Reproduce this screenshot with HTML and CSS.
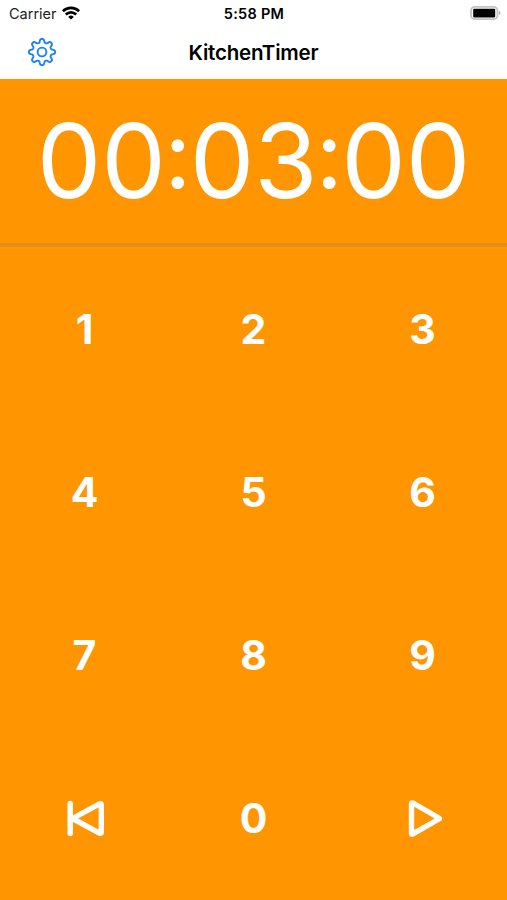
FILE: index.html
```html
<!DOCTYPE html>
<html lang="en">
<head>
<meta charset="utf-8">
<title>KitchenTimer</title>
<link rel="stylesheet" href="styles.css">
</head>
<body>
<div class="status">
  <div class="carrier"><span>Carrier</span>
    <svg class="wifi" width="18" height="14" viewBox="0 0 18 14" fill="none" stroke="#000" stroke-width="2.7"><path d="M.9 5.2a11.5 11.5 0 0 1 16.2 0"/><path d="M3.8 8.5a7.4 7.4 0 0 1 10.4 0"/><path d="M9 13.6 6.2 10.9a4 4 0 0 1 5.6 0z" fill="#000" stroke="none"/></svg>
  </div>
  <div class="clock">5:58 PM</div>
  <svg class="battery" width="31" height="14" viewBox="0 0 31 14"><rect x="1" y=".8" width="26.4" height="12.4" rx="3.8" fill="none" stroke="#c4c4c4" stroke-width="1.8"/><rect x="3.2" y="2.8" width="22" height="8.6" rx="1"/><path d="M28.8 4.8v4.6q1.8-.8 1.8-2.3t-1.8-2.3z" fill="#b4b4b4"/></svg>
</div>
<header class="nav">
  <svg class="gear" width="30" height="30" viewBox="-15 -15 30 30" fill="none" stroke="#1a82f5" stroke-width="1.9" stroke-linejoin="round"><path id="gear-path"/><circle r="4.4"/></svg>
  <h1>KitchenTimer</h1>
</header>
<main>
  <div class="display"><span>00</span><span class="colon">:</span><span>03</span><span class="colon">:</span><span>00</span></div>
  <div class="keys">
    <button>1</button><button>2</button><button>3</button>
    <button>4</button><button>5</button><button>6</button>
    <button>7</button><button>8</button><button>9</button>
    <button aria-label="Reset"><svg width="40" height="40" viewBox="0 0 40 40" fill="none" stroke="#fff" stroke-width="5.4" stroke-linecap="round" stroke-linejoin="round"><path d="M5.2 5.4v30.2M7.5 20.5 35 5.6q1.3 0 1.3 1.2v27.3q0 1.2-1.3 1.2z"/></svg></button>
    <button>0</button>
    <button aria-label="Start"><svg width="40" height="40" viewBox="0 0 40 40" fill="none" stroke="#fff" stroke-width="5.4" stroke-linejoin="round"><path d="M8.5 5.5v30q0 1 1.4.4L36 21q.9-.5 0-1L9.9 5q-1.4-.5-1.4.5z"/></svg></button>
  </div>
</main>
<script src="gear.js"></script>
</body>
</html>
```
FILE: styles.css
```css
* { box-sizing: border-box; }
body { margin: 0; height: 900px; display: flex; flex-direction: column; background: #fff; color: #000; font-family: Inter, sans-serif; overflow: hidden; }
.status { height: 27px; padding: 0 6px 0 9px; display: grid; grid-template-columns: 1fr auto 1fr; align-items: center; font-size: 14.5px; }
.carrier { display: flex; align-items: center; gap: 5px; color: #222; }
.wifi { margin-bottom: 2px; }
.clock { font-weight: 600; letter-spacing: .25px; margin-right: 2px; }
.battery { justify-self: end; margin-bottom: 1px; }
.nav { height: 52px; padding-bottom: 2px; display: grid; grid-template-columns: 1fr auto 1fr; align-items: center; }
.gear { margin-left: 27px; }
h1 { margin: 0; font-size: 20.5px; font-weight: 580; letter-spacing: -.2px; }
main { flex: 1; display: flex; flex-direction: column; background: #ff9500; color: #fff; }
.display { height: 168px; border-bottom: 4px solid #e38e18; display: flex; align-items: center; justify-content: center; font-size: 102.5px; line-height: 1; letter-spacing: -.2px; }
.colon { width: 24px; display: flex; justify-content: center; font-size: 94px; letter-spacing: 0; margin-bottom: 15px; }
.keys { flex: 1; display: grid; grid-template: repeat(4, 1fr) / repeat(3, 1fr); }
button { border: 0; padding: 0; background: none; color: inherit; font: 650 41px Inter, sans-serif; display: flex; align-items: center; justify-content: center; }
```
FILE: gear.js
```js
const points = [];
for (let i = 0; i < 160; i++) {
  const a = i / 160 * Math.PI * 2;
  const r = 11.3 + 1.9 * Math.tanh(1.7 * Math.cos(8 * a));
  points.push((r * Math.sin(a)).toFixed(2) + " " + (-r * Math.cos(a)).toFixed(2));
}
document.getElementById("gear-path").setAttribute("d", "M" + points.join("L") + "Z");
```
